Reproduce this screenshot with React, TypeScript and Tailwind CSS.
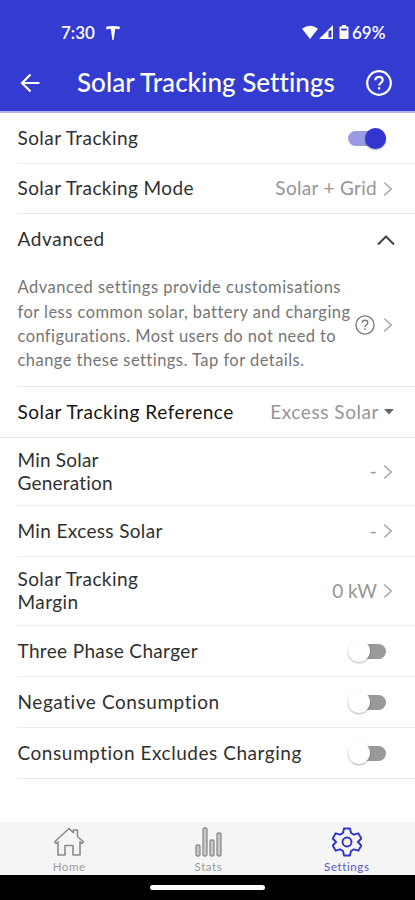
import type { ReactNode } from 'react';

function Chevron() {
  return (
    <svg width="10" height="16" viewBox="0 0 10 16" fill="none" stroke="#ababab" strokeWidth="1.7" className="shrink-0">
      <path d="M1.2 1.5 8.2 8l-7 6.5" />
    </svg>
  );
}

function Help({ size, width }: { size: number; width: number }) {
  return (
    <svg width={size} height={size} viewBox="0 0 26 26" fill="none" stroke="currentColor" strokeWidth={width} className="shrink-0">
      <circle cx="13" cy="13" r="11.8" />
      <path d="M9.4 10.2c0-2 1.6-3.4 3.7-3.4s3.6 1.3 3.6 3.2c0 2.7-3.6 2.9-3.6 5.6" />
      <path d="M13.1 17.2v2.2" />
    </svg>
  );
}

function Switch({ on = false }: { on?: boolean }) {
  return on ? (
    <div className="mr-[29px] flex h-[15px] w-[38px] items-center justify-end rounded-full bg-[#9a9be2]">
      <div className="size-[21px] shrink-0 rounded-full bg-[#3236cf] shadow-[0_1px_2px_rgba(0,0,0,0.35)]" />
    </div>
  ) : (
    <div className="mr-[29px] flex h-[15px] w-[38px] items-center rounded-full bg-[#999999]">
      <div className="size-[22px] shrink-0 rounded-full bg-white shadow-[0_1px_2px_rgba(0,0,0,0.3)]" />
    </div>
  );
}

function Row({ label, height, children, line = 'inset' }: { label: ReactNode; height: string; children: ReactNode; line?: 'inset' | 'full' | 'none' }) {
  return (
    <div className={`relative flex items-center justify-between pb-[1px] pl-[17.5px] ${height}`}>
      <div className="pb-[2px] text-[19px] leading-[23px] tracking-[0.42px] whitespace-nowrap text-[#303030]">{label}</div>
      {children}
      {line !== 'none' && (
        <div className={`absolute right-0 bottom-0 h-[1.5px] bg-[#ececec] ${line === 'full' ? 'left-0' : 'left-[17px]'}`} />
      )}
    </div>
  );
}

function Value({ children }: { children: ReactNode }) {
  return (
    <div className="mr-[22px] flex items-center gap-[6px] text-[19px] leading-[23px] tracking-[0.3px] whitespace-nowrap text-[#959595]">
      <div className="pb-[2px]">{children}</div>
      <Chevron />
    </div>
  );
}

export default function App() {
  return (
    <div className="flex h-[900px] w-[415px] flex-col overflow-hidden bg-white font-['Lato',sans-serif] [font-variant-ligatures:none]">
      <header className="h-[113px] shrink-0 border-b-2 border-[#b4b5ee] bg-[#343bd0] text-white">
        <div className="flex h-[56px] items-center pt-[9px] pl-[61px]">
          <span className="w-[45px] text-[17px] font-semibold">7:30</span>
          <svg width="14" height="14" viewBox="0 0 14 14" fill="white">
            <path d="M0 .8Q7-.8 14 .8l-.7 2.600Q11.500 2.700 9.200 2.700L7.600 14H6.400L4.800 2.700Q2.500 2.700 .7 3.400z" />
          </svg>
          <svg className="ml-[182px]" width="50" height="15" viewBox="0 0 50 15" fill="white">
            <path d="M0 3.7Q8-2 16 3.7L8 14z" />
            <path fillRule="evenodd" d="M31 0v14H17zm-1.500 5-3 1v6.500h3z" />
            <path fillRule="evenodd" d="M40 0h4v1.500h1.500q1 0 1 1V13q0 1-1 1h-7q-1 0-1-1V2.500q0-1 1-1H40zM39.200 3.500v2h5.600v-2z" />
          </svg>
          <span className="text-[17px] font-semibold whitespace-nowrap">69%</span>
        </div>
        <div className="flex h-[54px] items-center pl-[20px]">
          <svg width="20" height="20" viewBox="0 0 20 20" fill="none" stroke="white" strokeWidth="2.2">
            <path d="M19.500 10H2M10.500 1.500 2 10l8.500 8.500" />
          </svg>
          <h1 className="ml-[37px] w-[289px] pb-[2px] text-[26px] leading-[32px] font-medium tracking-[0.04px] whitespace-nowrap">Solar Tracking Settings</h1>
          <Help size={26} width={2.2} />
        </div>
      </header>

      <main className="h-[709px] shrink-0">
        <Row height="h-[51px]" label="Solar Tracking"><Switch on /></Row>
        <Row height="h-[50px]" label="Solar Tracking Mode"><Value>Solar + Grid</Value></Row>
        <Row height="h-[52px]" line="none" label={<span className="tracking-[0.6px]">Advanced</span>}>
          <svg className="mr-[20px]" width="18" height="12" viewBox="0 0 18 12" fill="none" stroke="#444" strokeWidth="2">
            <path d="m1 10.500 8-8 8 8" />
          </svg>
        </Row>
        <div className="relative flex h-[121px] items-center pb-[3px] pl-[17.5px]">
          <p className="w-[337.5px] pb-[2px] text-[16.5px] leading-[24.4px] whitespace-nowrap text-[#757575]">
            <span className="tracking-[0.51px]">Advanced settings provide customisations</span><br />
            <span className="tracking-[0.46px]">for less common solar, battery and charging</span><br />
            <span className="tracking-[0.4px]">configurations. Most users do not need to</span><br />
            <span className="tracking-[0.46px]">change these settings. Tap for details.</span>
          </p>
          <div className="flex items-center gap-[8px] text-[#777]"><Help size={20} width={1.7} /><Chevron /></div>
          <div className="absolute right-0 bottom-0 left-[17px] h-[1.5px] bg-[#ececec]" />
        </div>
        <Row height="h-[51px]" line="full" label={<span className="tracking-[0.54px] text-[#151515]">Solar Tracking Reference</span>}>
          <div className="mr-[21px] flex items-center gap-[5px] text-[19px] leading-[23px] tracking-[0.55px] text-[#959595]">
            <span className="pb-[2px]">Excess Solar</span>
            <svg width="10" height="6" viewBox="0 0 10 6" fill="#666"><path d="M0 0h10L5 5.5z" /></svg>
          </div>
        </Row>
        <Row height="h-[68px]" label={<span className="tracking-[0.2px]">Min Solar<br />Generation</span>}><Value>-</Value></Row>
        <Row height="h-[51px]" label={<span className="tracking-[0.35px]">Min Excess Solar</span>}><Value>-</Value></Row>
        <Row height="h-[69px]" label={<>Solar Tracking<br />Margin</>}><Value><span className="tracking-[0px]">0 kW</span></Value></Row>
        <Row height="h-[51px]" label={<span className="tracking-[0.35px]">Three Phase Charger</span>}><Switch /></Row>
        <Row height="h-[51px]" label={<span className="tracking-[0.57px]">Negative Consumption</span>}><Switch /></Row>
        <Row height="h-[51px]" label={<span className="tracking-[0.54px]">Consumption Excludes Charging</span>}><Switch /></Row>
      </main>

      <nav className="grid h-[53px] shrink-0 grid-cols-3 bg-[#f5f5f5] text-[11.5px] leading-[13px] tracking-[0.6px] text-[#9a9a9a]">
        <div className="flex flex-col items-center pt-[5px]">
          <svg width="32" height="30" viewBox="0 0 32 30" fill="none" stroke="#8b8b8b" strokeWidth="1.6" strokeLinejoin="round">
            <path d="M1.500 15 16 1.500l4.500 4.200V3h4v6.500l6 5.500-1.500 1.500-2-1.700V28h-7v-9.500h-8V28H5V14.800L3 16.500z" />
          </svg>
          <span className="mt-[3px]">Home</span>
        </div>
        <div className="flex flex-col items-center pt-[5px] pl-[2px]">
          <svg width="30" height="30" viewBox="-2 0 30 30" fill="#c8c8c8" stroke="#8b8b8b" strokeWidth="1.3">
            <rect x="1" y="18" width="4" height="11" rx="1.5" /><rect x="8" y="1" width="4" height="28" rx="1.5" />
            <rect x="15" y="13" width="4" height="16" rx="1.5" /><rect x="22" y="6" width="4" height="23" rx="1.5" />
          </svg>
          <span className="mt-[3px]">Stats</span>
        </div>
        <div className="flex flex-col items-center pt-[5px] pl-[2px] text-[#5558cc]">
          <svg width="30" height="30" viewBox="0 0 30 30" fill="none" stroke="#2f33c9" strokeWidth="1.9" strokeLinejoin="round">
            <path d="M12 1.500h6l1 4.500 3 1.700 4.300-1.400 3 5.200-3.400 3.500 3.400 3.500-3 5.200-4.300-1.400-3 1.700-1 4.500h-6l-1-4.500-3-1.700-4.300 1.400-3-5.200L4.100 15 .7 11.500l3-5.200L8 7.700 11 6z" />
            <circle cx="15" cy="15" r="4.5" />
          </svg>
          <span className="mt-[3px]">Settings</span>
        </div>
      </nav>
      <footer className="flex h-[25px] shrink-0 justify-center bg-black pt-[10px]">
        <div className="h-[5px] w-[115px] rounded-full bg-white" />
      </footer>
    </div>
  );
}
